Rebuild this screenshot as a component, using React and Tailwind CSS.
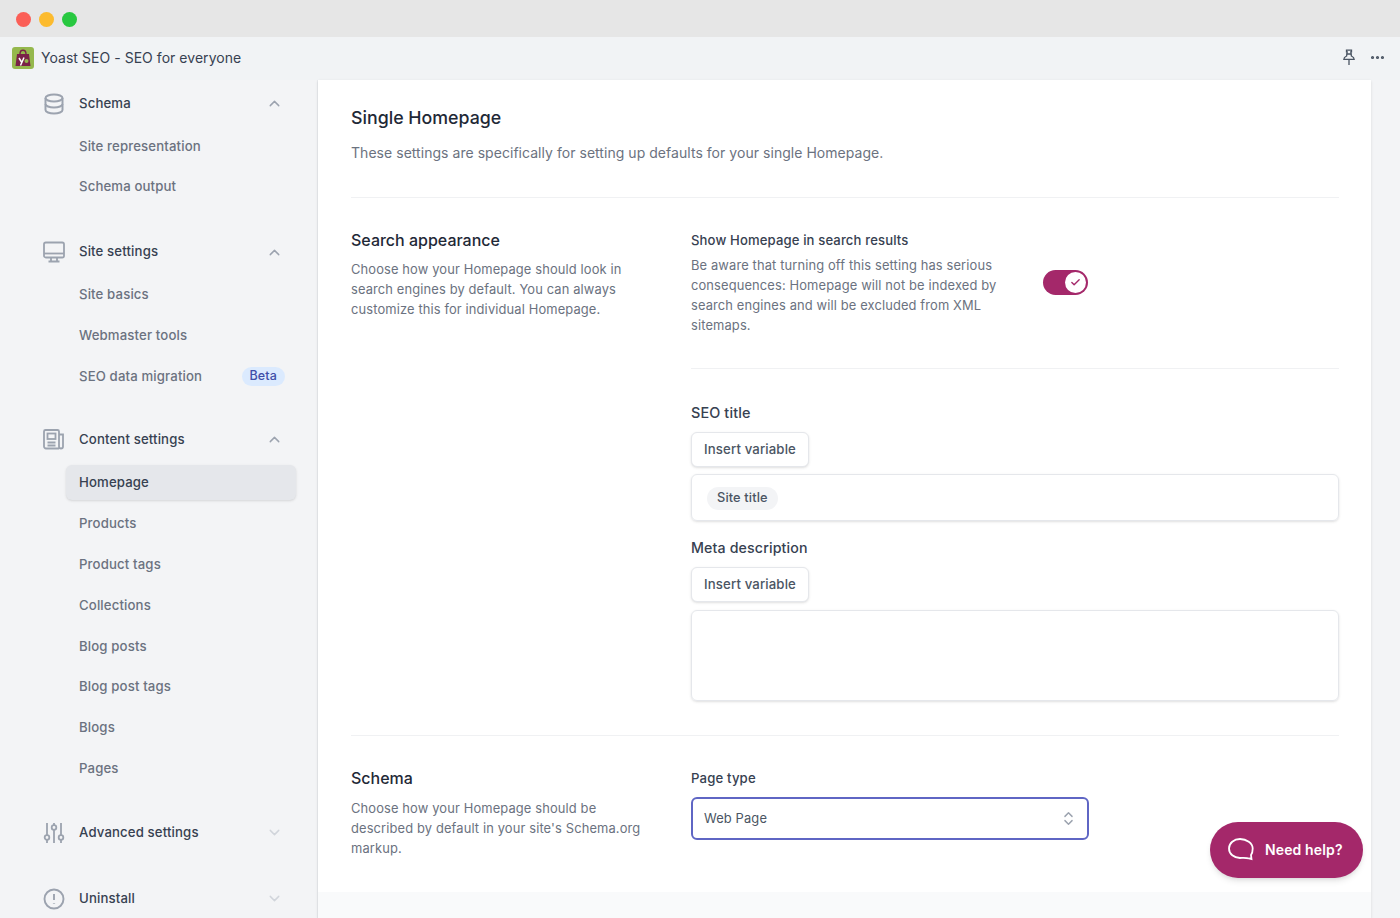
import { ChevronUp, ChevronDown, Check, ChevronsUpDown, Ellipsis } from "lucide-react";

const DatabaseIcon = () => (
  <svg width="22" height="22" viewBox="0 0 22 22" fill="none" stroke="#9ca3af" strokeWidth="2">
    <ellipse cx="11" cy="5" rx="8.500" ry="3.500" />
    <path d="M2.500 5v12c0 2 3.800 3.500 8.500 3.500s8.500-1.500 8.500-3.500V5" />
    <path d="M2.500 11c0 2 3.800 3.500 8.500 3.500s8.500-1.500 8.500-3.500" />
  </svg>
);

const MonitorIcon = () => (
  <svg width="22" height="22" viewBox="0 0 22 22" fill="none" stroke="#9ca3af" strokeWidth="1.800">
    <rect x="1" y="1.500" width="20" height="15" rx="1.800" />
    <path d="M1 12.500h20" />
    <path d="M8 16.500v3M14 16.500v3M5.500 20.500h11" />
  </svg>
);

const NewsIcon = () => (
  <svg width="22" height="22" viewBox="0 0 22 22" fill="none" stroke="#9ca3af" strokeWidth="1.800">
    <path d="M16 20.500H3a2 2 0 0 1-2-2V3.500a1.500 1.500 0 0 1 1.500-1.500h12a1.500 1.500 0 0 1 1.500 1.500v15a2 2 0 0 0 4 0V6.500h-4" />
    <rect x="4.500" y="5.500" width="8" height="5.500" />
    <path d="M4.500 14.500h8M4.500 17.500h8" />
  </svg>
);

const SlidersIcon = () => (
  <svg width="22" height="22" viewBox="0 0 22 22" fill="none" stroke="#9ca3af" strokeWidth="1.800">
    <path d="M4 1v12M4 18v3M11 1v2M11 8v13M18 1v12M18 18v3" />
    <circle cx="4" cy="15.500" r="2.300" />
    <circle cx="11" cy="5.500" r="2.300" />
    <circle cx="18" cy="15.500" r="2.300" />
  </svg>
);

const AlertIcon = () => (
  <svg width="22" height="22" viewBox="0 0 22 22" fill="none" stroke="#9ca3af" strokeWidth="1.900">
    <circle cx="11" cy="11" r="9.500" />
    <path d="M11 6v6" />
    <path d="M11 15.200v.6" strokeWidth="2.200" />
  </svg>
);

const PinIcon = () => (
  <svg width="14" height="17" viewBox="0 0 14 17" fill="none" stroke="#4b5563" strokeWidth="1.300">
    <path d="M4.500 1.200h5v1.600h-.7l.6 4.200c1.700.8 2.800 2 2.800 3.400H1.800c0-1.400 1.100-2.600 2.800-3.400l.6-4.200h-.7z" />
    <path d="M4.500 5h5M7 10.500v5.500" />
  </svg>
);

const groups = [
  { label: "Schema", Icon: DatabaseIcon, open: true, items: ["Site representation", "Schema output"] },
  { label: "Site settings", Icon: MonitorIcon, open: true, items: ["Site basics", "Webmaster tools", "SEO data migration"] },
  {
    label: "Content settings",
    Icon: NewsIcon,
    open: true,
    items: ["Homepage", "Products", "Product tags", "Collections", "Blog posts", "Blog post tags", "Blogs", "Pages"],
  },
  { label: "Advanced settings", Icon: SlidersIcon, open: false, items: [] },
  { label: "Uninstall", Icon: AlertIcon, open: false, items: [] },
];

const SideGroup = ({ group }) => {
  const { label, Icon, open, items } = group;
  return (
    <div>
      <div className="h-[41px] flex items-center pl-[43px] pr-[34px]">
        <Icon />
        <span className="ml-[14px] flex-1 text-[#374151] font-medium">{label}</span>
        {open ? (
          <ChevronUp size={17} strokeWidth={2} className="text-[#9ca3af]" />
        ) : (
          <ChevronDown size={17} strokeWidth={2} className="text-[#d1d5db]" />
        )}
      </div>
      {items.length > 0 && (
        <div className="pt-[2px] pl-[66px] pr-[21px]">
          {items.map((item) => (
            <div
              key={item}
              className={
                item === "Homepage"
                  ? "h-[35px] mt-[3.400px] mb-[3.400px] flex items-center px-[13px] rounded-md bg-[#e5e7eb] text-[#374151] font-medium shadow-sm"
                  : "h-[40.800px] flex items-center px-[13px] text-[#6b7280] font-medium"
              }
            >
              <span className="flex-1">{item}</span>
              {item === "SEO data migration" && (
                <span className="mr-[-2px] h-[19px] px-[8px] flex items-center rounded-full bg-[#dbeafe] text-[#3f4fa8] text-[12.500px]">
                  Beta
                </span>
              )}
            </div>
          ))}
        </div>
      )}
    </div>
  );
};

const InsertButton = () => (
  <button className="h-[35px] w-[118px] rounded-md border border-[#e5e7eb] bg-white shadow-sm text-[#4b5563] font-medium text-center">
    Insert variable
  </button>
);

const App = () => {
  return (
    <div className="h-[918px] w-[1400px] overflow-hidden flex flex-col bg-[#f3f4f6] text-[13.200px] tracking-[0.010em] font-['Inter',sans-serif]">
      <div className="h-[37px] shrink-0 bg-[#e6e6e6] flex items-center gap-[8px] pl-[16px] pt-[2px]">
        <span className="w-[15px] h-[15px] rounded-full bg-[#fb5f57]" />
        <span className="w-[15px] h-[15px] rounded-full bg-[#fcbb2e]" />
        <span className="w-[15px] h-[15px] rounded-full bg-[#28c840]" />
      </div>

      <div className="h-[43px] shrink-0 bg-[#f1f3f5] flex items-center pl-[12px] pr-[14px] pb-[2px]">
        <svg width="22" height="22" viewBox="0 0 22 22">
          <rect width="22" height="22" rx="3" fill="#95b84d" />
          <path d="M5 7h12l1.500 12h-15z" fill="#7a2148" />
          <path d="M8 7c0-5 6-5 6 0" fill="none" stroke="#7a2148" strokeWidth="1.400" />
          <path d="M7 11l2.500 4M12 10.500l-3.500 8" stroke="#fff" strokeWidth="1.500" fill="none" />
          <circle cx="14.500" cy="14" r="2" fill="#95b84d" />
        </svg>
        <span className="ml-[7px] flex-1 text-[14px] tracking-[0.040px] text-[#374151]">
          Yoast SEO - SEO for everyone
        </span>
        <PinIcon />
        <Ellipsis size={17} strokeWidth={2.500} className="text-[#4b5563] ml-[13px]" />
      </div>

      <div className="flex-1 flex min-h-0">
        <aside className="w-[318px] shrink-0 pt-[3px] flex flex-col border-r border-[#e9ebee]">
          <SideGroup group={groups[0]} />
          <div className="mt-[24px]">
            <SideGroup group={groups[1]} />
          </div>
          <div className="mt-[22px]">
            <SideGroup group={groups[2]} />
          </div>
          <div className="mt-[23px]">
            <SideGroup group={groups[3]} />
          </div>
          <div className="mt-[25px]">
            <SideGroup group={groups[4]} />
          </div>
        </aside>

        <main className="w-[1053px] bg-white shadow-sm relative flex flex-col">
          <div className="flex-1 pl-[33px] pr-[32px]">
            <h1 className="mt-[25px] text-[17.800px] tracking-normal leading-[26px] font-medium text-[#1f2937]">
              Single Homepage
            </h1>
            <p className="mt-[12px] text-[14px] tracking-[0.040px] leading-[20px] text-[#6b7280]">
              These settings are specifically for setting up defaults for your single Homepage.
            </p>
            <div className="mt-[34px] h-px bg-[#f0f1f3]" />

            <div className="mt-[31px] grid grid-cols-[340px_1fr]">
              <div>
                <h2 className="text-[16px] tracking-normal leading-[22px] font-medium text-[#1f2937]">
                  Search appearance
                </h2>
                <p className="mt-[9px] w-[290px] text-[12.900px] leading-[20px] text-[#6b7280]">
                  Choose how your Homepage should look in search engines by default. You can always customize this for
                  individual Homepage.
                </p>
              </div>
              <div>
                <div className="flex">
                  <div className="w-[310px]">
                    <h3 className="text-[13.100px] leading-[22px] font-medium text-[#374151]">
                      Show Homepage in search results
                    </h3>
                    <p className="mt-[5px] text-[12.900px] leading-[20px] text-[#6b7280]">
                      Be aware that turning off this setting has serious consequences: Homepage will not be indexed by
                      search engines and will be excluded from XML sitemaps.
                    </p>
                  </div>
                  <div className="ml-[42px] mt-[41px] w-[45px] h-[25px] rounded-full bg-[#a4286a] flex items-center justify-end pr-[2px]">
                    <span className="w-[21px] h-[21px] rounded-full bg-white flex items-center justify-center">
                      <Check size={11} strokeWidth={3} className="text-[#a4286a]" />
                    </span>
                  </div>
                </div>
                <div className="mt-[32px] h-px bg-[#f0f1f3]" />

                <div className="mt-[33px] text-[14.400px] leading-[22px] font-medium text-[#374151]">SEO title</div>
                <div className="mt-[8px]">
                  <InsertButton />
                </div>
                <div className="mt-[7px] h-[47px] rounded-md border border-[#e5e7eb] shadow-sm flex items-center pl-[15px]">
                  <span className="mt-[1px] h-[23px] px-[10px] rounded-full bg-[#f3f4f6] flex items-center text-[12.800px] font-medium text-[#4b5563]">
                    Site title
                  </span>
                </div>
                <div className="mt-[16px] text-[14.200px] leading-[22px] font-medium text-[#374151]">
                  Meta description
                </div>
                <div className="mt-[8px]">
                  <InsertButton />
                </div>
                <div className="mt-[8px] h-[91px] rounded-md border border-[#e5e7eb] shadow-sm" />
              </div>
            </div>

            <div className="mt-[34px] h-px bg-[#f0f1f3]" />

            <div className="mt-[31px] grid grid-cols-[340px_1fr]">
              <div>
                <h2 className="text-[16px] tracking-normal leading-[22px] font-medium text-[#1f2937]">Schema</h2>
                <p className="mt-[10px] w-[295px] text-[12.900px] leading-[20px] text-[#6b7280]">
                  Choose how your Homepage should be described by default in your site's Schema.org markup.
                </p>
              </div>
              <div>
                <div className="leading-[22px] font-medium text-[#374151]">Page type</div>
                <div className="mt-[8px] w-[398px] h-[43px] rounded-md border-2 border-[#5f66c4] flex items-center pl-[11px] pr-[10px] text-[12.900px] text-[#4b5563]">
                  <span className="flex-1">Web Page</span>
                  <ChevronsUpDown size={17} strokeWidth={2} className="text-[#9ca3af]" />
                </div>
              </div>
            </div>
          </div>

          <div className="h-[26px] shrink-0 bg-[#f9fafb]" />

          <div className="absolute right-[8px] top-[742px] w-[153px] h-[56px] rounded-full bg-[#a4286a] shadow-md flex items-center pl-[17px] pb-[1px] text-[14px] text-white font-semibold">
            <svg width="27" height="25" viewBox="0 0 27 25" fill="none" stroke="#fff" strokeWidth="1.800">
              <path d="M13 2C7 2 2 6 2 11.500S7 21 13 21c3 0 7-.3 9 .5l2.500.5-.5-4c1.200-1.600 1.700-3.700 1.700-6.500C25.700 6 19.500 2 13 2z" />
            </svg>
            <span className="ml-[11px]">Need help?</span>
          </div>
        </main>
      </div>
    </div>
  );
};

export default App;
